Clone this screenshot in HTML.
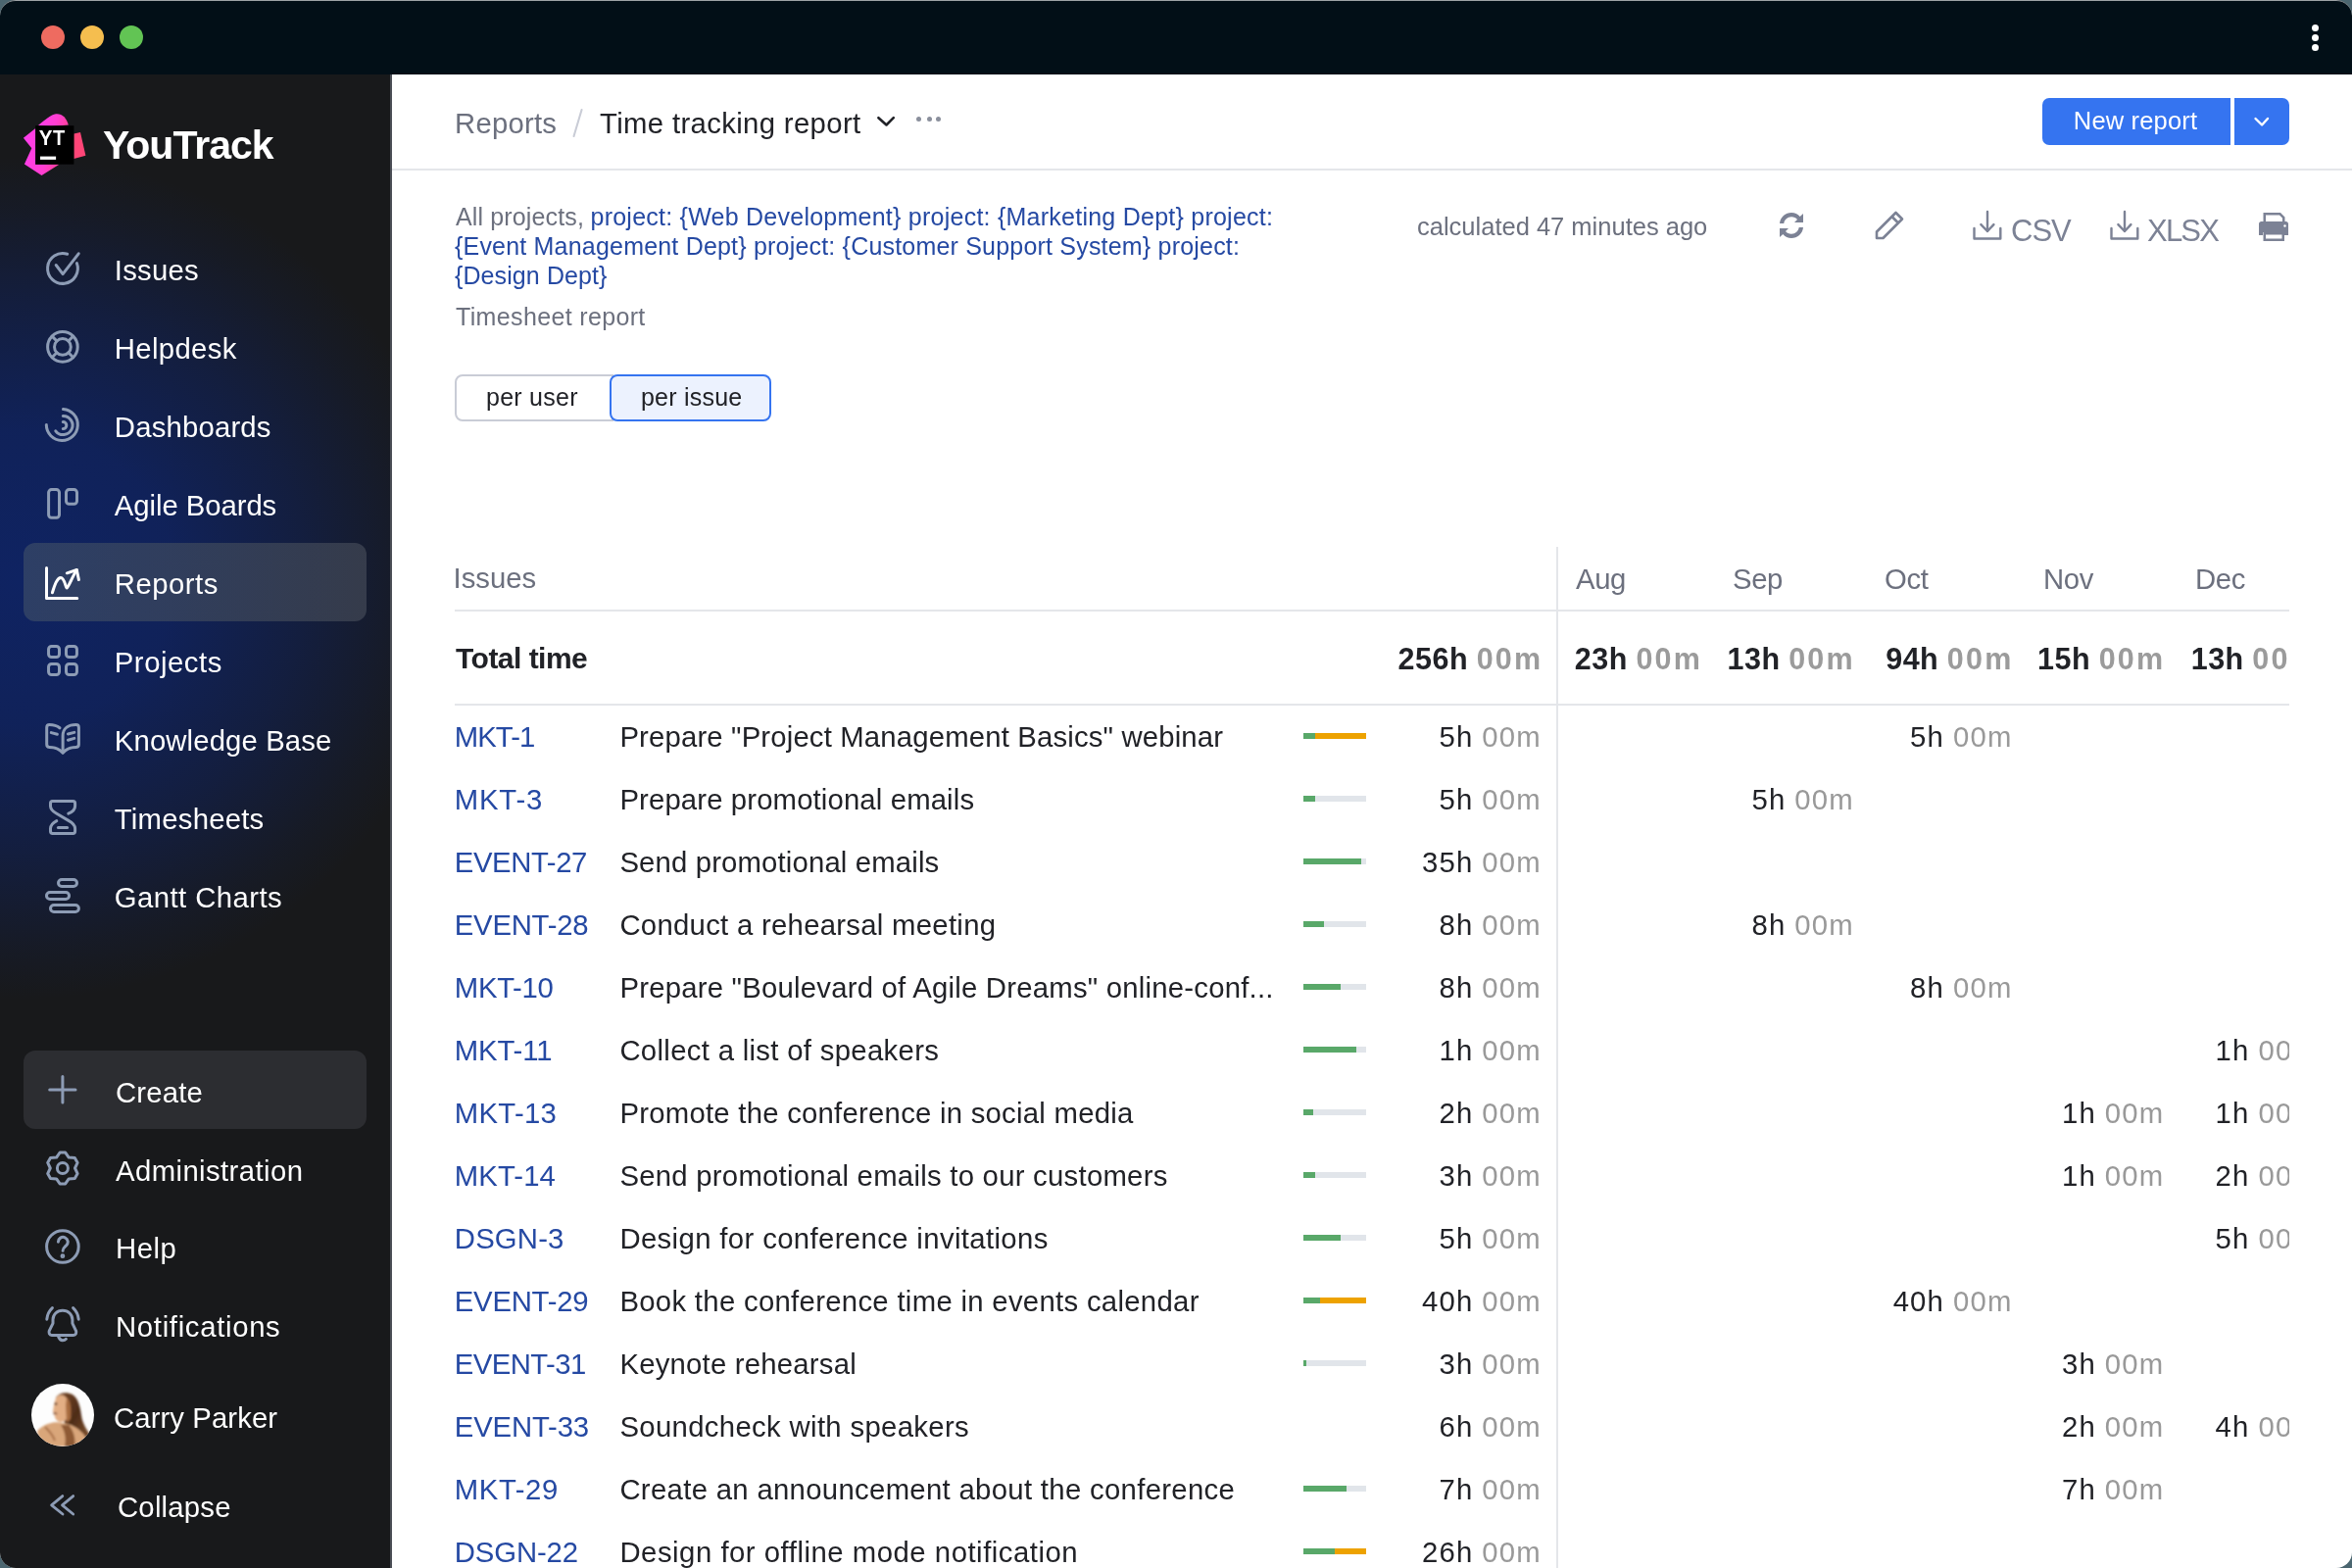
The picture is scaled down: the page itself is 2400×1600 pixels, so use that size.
<!DOCTYPE html>
<html><head><meta charset="utf-8">
<style>
*{box-sizing:border-box;margin:0;padding:0}
html,body{width:2400px;height:1600px;overflow:hidden;background:#4b6670}
body{font-family:"Liberation Sans",sans-serif}
.win{position:absolute;left:0;top:0;width:2400px;height:1600px;border-radius:16px;overflow:hidden;background:#fff;will-change:transform}
.a{position:absolute;white-space:nowrap}
.side{left:0;top:76px;width:400px;height:1524px;background:#18191b;overflow:hidden}
.glow{position:absolute;left:-430px;top:84px;width:900px;height:860px;border-radius:50%;background:radial-gradient(closest-side,rgba(15,35,98,1) 0%,rgba(15,35,98,.88) 35%,rgba(15,35,98,.5) 65%,rgba(15,35,98,.15) 88%,rgba(15,35,98,0) 100%)}
.glow2{display:none}
.topline{position:absolute;left:0;top:0;width:2400px;height:1600px;border-radius:16px;border-top:1.5px solid #9ea3a6;pointer-events:none}
</style></head><body>
<div class="win">
<div class="a" style="left:0px;top:0px;width:2400px;height:76px;background:#020f17"></div>
<div class="a" style="left:42px;top:26px;width:24px;height:24px;background:#ee6b60;border-radius:50%"></div>
<div class="a" style="left:82px;top:26px;width:24px;height:24px;background:#f5be4f;border-radius:50%"></div>
<div class="a" style="left:122px;top:26px;width:24px;height:24px;background:#62c454;border-radius:50%"></div>
<div class="a" style="left:2359px;top:24.5px;width:7px;height:7px;background:#fff;border-radius:50%"></div>
<div class="a" style="left:2359px;top:34.5px;width:7px;height:7px;background:#fff;border-radius:50%"></div>
<div class="a" style="left:2359px;top:44.5px;width:7px;height:7px;background:#fff;border-radius:50%"></div>
<div class="a side"><div class="glow"></div><div class="glow2"></div></div>
<div class="a" style="left:398px;top:76px;width:2px;height:1524px;background:#4b4e56"></div>
<svg class="a" style="left:16px;top:106px;" width="80" height="80" viewBox="0 0 80 80">
<defs><linearGradient id="lg" x1="0" y1="0" x2="1" y2="0.2">
<stop offset="0" stop-color="#ff3ef0"/><stop offset="0.7" stop-color="#ff3ed0"/><stop offset="1" stop-color="#ff40a8"/></linearGradient></defs>
<path fill="url(#lg)" d="M23 22 C30 16 36 11 41 10.2 C47 9.5 52 14 53.8 21.5 L36 23 Z"/>
<path fill="url(#lg)" d="M24 22 L7.9 34.7 L16.3 45.2 L8.9 61.5 L26.5 73 L44.4 61.7 L20.2 61.7 L20.2 25 Z"/>
<path fill="#ff4577" d="M59.4 30.6 L66 29.1 L71.4 52.8 L59.4 55.9 Z"/>
<rect x="20.2" y="22.2" width="39.2" height="39.5" fill="#000"/>
<path fill="#fff" d="M24 27 h3.2 l3.4 6.6 l3.4 -6.6 h3.2 l-5.2 9.4 v5.7 h-2.8 v-5.7 Z"/>
<path fill="#fff" d="M38.2 27 h11.8 v2.6 h-4.5 v12.5 h-2.8 v-12.5 h-4.5 Z"/>
<rect x="25" y="53.6" width="16.1" height="3.3" fill="#fff"/>
</svg>
<div class="a" style="left:105.0px;top:123.3px;font-size:41px;line-height:51px;color:#fff;font-weight:700;letter-spacing:-1.0px;">YouTrack</div>
<svg class="a" style="left:36px;top:246px;" width="60" height="60" viewBox="0 0 60 60"><g fill="none" stroke="#8d9cb5" stroke-width="3" stroke-linecap="round" stroke-linejoin="round"><path d="M32.7 13.3 A15.4 15.4 0 1 0 42.4 22.6"/><path d="M21.2 24.5 L28.1 33.6 L44.2 12.8"/></g></svg>
<div class="a" style="left:116.8px;top:257.3px;font-size:29.3px;line-height:37px;color:#fff;letter-spacing:0.26px;">Issues</div>
<svg class="a" style="left:36px;top:326px;" width="60" height="60" viewBox="0 0 60 60"><g fill="none" stroke="#8d9cb5" stroke-width="3" stroke-linecap="round" stroke-linejoin="round"><circle cx="27.9" cy="27.9" r="15.3"/><circle cx="27.9" cy="27.9" r="8.4"/><path d="M22 22 L17.1 17.1 M33.8 22 L38.7 17.1 M22 33.8 L17.1 38.7 M33.8 33.8 L38.7 38.7"/></g></svg>
<div class="a" style="left:116.8px;top:337.3px;font-size:29.3px;line-height:37px;color:#fff;letter-spacing:0.355px;">Helpdesk</div>
<svg class="a" style="left:36px;top:406px;" width="60" height="60" viewBox="0 0 60 60"><g fill="none" stroke="#8d9cb5" stroke-width="3" stroke-linecap="round" stroke-linejoin="round"><path d="M28.5 11.5 A16 16 0 1 1 11.3 27.6"/><path d="M28.3 18.4 A9.6 9.6 0 1 1 20.8 33.8"/><path d="M28.3 24.6 A3.5 3.5 0 0 1 28.3 31.6"/></g></svg>
<div class="a" style="left:116.8px;top:417.3px;font-size:29.3px;line-height:37px;color:#fff;letter-spacing:0.19px;">Dashboards</div>
<svg class="a" style="left:36px;top:486px;" width="60" height="60" viewBox="0 0 60 60"><g fill="none" stroke="#8d9cb5" stroke-width="3" stroke-linecap="round" stroke-linejoin="round"><rect x="13.6" y="13.6" width="10.9" height="28.7" rx="3"/><rect x="31.5" y="13.6" width="11" height="14.7" rx="3"/></g></svg>
<div class="a" style="left:116.8px;top:497.3px;font-size:29.3px;line-height:37px;color:#fff;letter-spacing:-0.059px;">Agile Boards</div>
<div class="a" style="left:24px;top:554px;width:350px;height:80px;border-radius:12px;background:linear-gradient(90deg,rgba(64,80,104,.62),rgba(64,70,84,.75))"></div>
<svg class="a" style="left:36px;top:566px;" width="60" height="60" viewBox="0 0 60 60"><g fill="none" stroke="#fff" stroke-width="3" stroke-linecap="round" stroke-linejoin="round"><path d="M11.5 13.4 V44.4 H42.7"/><path d="M17.4 38.7 C20 30 22.5 23.5 26 23.5 C30 23.5 31 34.1 32.1 34.1 C33.5 34.1 38 22 42.3 15.5"/><path d="M32.3 18.8 L42.3 15.5 L44.4 25.6"/></g></svg>
<div class="a" style="left:116.8px;top:577.3px;font-size:29.3px;line-height:37px;color:#fff;letter-spacing:0.498px;">Reports</div>
<svg class="a" style="left:36px;top:646px;" width="60" height="60" viewBox="0 0 60 60"><g fill="none" stroke="#8d9cb5" stroke-width="3" stroke-linecap="round" stroke-linejoin="round"><rect x="13.55" y="13.55" width="10.95" height="10.95" rx="3"/><rect x="31.5" y="13.55" width="10.95" height="10.95" rx="3"/><rect x="13.55" y="31.5" width="10.95" height="10.95" rx="3"/><rect x="31.5" y="31.5" width="10.95" height="10.95" rx="3"/></g></svg>
<div class="a" style="left:116.8px;top:657.3px;font-size:29.3px;line-height:37px;color:#fff;letter-spacing:0.529px;">Projects</div>
<svg class="a" style="left:36px;top:726px;" width="60" height="60" viewBox="0 0 60 60"><g fill="none" stroke="#8d9cb5" stroke-width="3" stroke-linecap="round" stroke-linejoin="round"><path d="M24.9 16.8 C22 14.5 18 13.6 14.5 13.6 C12.8 13.6 11.7 14.7 11.7 16.4 V33.6 C11.7 35.3 12.8 36.4 14.5 36.4 C19 36.4 24 37.5 28.1 42.3 C32 37.5 37 36.4 41.6 36.4 C43.3 36.4 44.4 35.3 44.4 33.6 V16.4 C44.4 14.7 43.3 13.6 41.6 13.6 C34 13.6 28.1 17 28.1 25 V40.5"/><path d="M16.3 21.6 L22.4 23.3 M33.4 23 L39.8 21.4 M33.4 29.2 L39.8 27.4"/></g></svg>
<div class="a" style="left:116.8px;top:737.3px;font-size:29.3px;line-height:37px;color:#fff;letter-spacing:0.126px;">Knowledge Base</div>
<svg class="a" style="left:36px;top:806px;" width="60" height="60" viewBox="0 0 60 60"><g fill="none" stroke="#8d9cb5" stroke-width="3" stroke-linecap="round" stroke-linejoin="round"><path d="M17.7 11.6 H38.4 C39.8 11.6 40.6 12.4 40.6 13.8 V16.5 C40.6 20 38 22.5 33.8 24.2"/><path d="M17.7 11.6 C16.3 11.6 15.5 12.4 15.5 13.8 V16.5 C15.5 20 18 22 21.5 24 L34.4 31.6 C38 33.6 40.6 36 40.6 39.5 V42.2 C40.6 43.6 39.8 44.4 38.4 44.4 H17.7 C16.3 44.4 15.5 43.6 15.5 42.2 V39.5 C15.5 36 18 33.6 21.8 31.6"/><path d="M23.4 38.5 H32.6"/></g></svg>
<div class="a" style="left:116.8px;top:817.3px;font-size:29.3px;line-height:37px;color:#fff;letter-spacing:0.237px;">Timesheets</div>
<svg class="a" style="left:36px;top:886px;" width="60" height="60" viewBox="0 0 60 60"><g fill="none" stroke="#8d9cb5" stroke-width="3" stroke-linecap="round" stroke-linejoin="round"><rect x="23.5" y="11.45" width="19" height="7" rx="3.5"/><rect x="11.45" y="24.55" width="23.1" height="7" rx="3.5"/><rect x="15.5" y="37.45" width="28.9" height="7" rx="3.5"/></g></svg>
<div class="a" style="left:116.8px;top:897.3px;font-size:29.3px;line-height:37px;color:#fff;letter-spacing:0.441px;">Gantt Charts</div>
<div class="a" style="left:24px;top:1072px;width:350px;height:80px;border-radius:12px;background:#2c2d31"></div>
<svg class="a" style="left:36px;top:1082px;" width="60" height="60" viewBox="0 0 60 60"><g fill="none" stroke="#8d9cb5" stroke-width="3" stroke-linecap="round" stroke-linejoin="round"><path d="M27.9 16.5 V42.9 M14.7 30 H41"/></g></svg>
<div class="a" style="left:118.0px;top:1095.8px;font-size:29.3px;line-height:37px;color:#fff;letter-spacing:0.18px;">Create</div>
<svg class="a" style="left:36px;top:1162px;" width="60" height="60" viewBox="0 0 60 60"><g fill="none" stroke="#8d9cb5" stroke-width="3" stroke-linecap="round" stroke-linejoin="round"><path d="M25.09 14.05 L30.71 14.05 L34.20 19.09 L40.31 19.59 L43.12 24.46 L40.50 30.00 L43.12 35.54 L40.31 40.41 L34.20 40.91 L30.71 45.95 L25.09 45.95 L21.60 40.91 L15.49 40.41 L12.68 35.54 L15.30 30.00 L12.68 24.46 L15.49 19.59 L21.60 19.09 Z"/><circle cx="27.9" cy="30" r="5.5"/></g></svg>
<div class="a" style="left:118.0px;top:1175.8px;font-size:29.3px;line-height:37px;color:#fff;letter-spacing:0.409px;">Administration</div>
<svg class="a" style="left:36px;top:1242px;" width="60" height="60" viewBox="0 0 60 60"><g fill="none" stroke="#8d9cb5" stroke-width="3" stroke-linecap="round" stroke-linejoin="round"><circle cx="27.9" cy="30" r="16.3"/><path d="M23.4 25.2 A4.9 4.9 0 1 1 31.6 28.9 C29.5 30.8 28.1 31.8 28.1 34.3"/><circle cx="27.9" cy="39.7" r="0.9" fill="#8d9cb5"/></g></svg>
<div class="a" style="left:118.0px;top:1254.8px;font-size:29.3px;line-height:37px;color:#fff;letter-spacing:0.502px;">Help</div>
<svg class="a" style="left:36px;top:1322px;" width="60" height="60" viewBox="0 0 60 60"><g fill="none" stroke="#8d9cb5" stroke-width="3" stroke-linecap="round" stroke-linejoin="round"><path d="M27.9 15.2 C22 15.2 18 19.5 18 24.5 V28.3 L14.3 35.8 C13.5 37.8 14.3 40.4 16.8 40.4 H39 C41.5 40.4 42.3 37.8 41.5 35.8 L37.9 28.3 V24.5 C37.9 19.5 33.8 15.2 27.9 15.2 Z"/><path d="M23.6 41.8 C24.6 45 26.5 45.8 27.9 45.8 C29.6 45.8 30.6 45.2 31.4 44.3"/><path d="M17.4 12.6 C14 15.8 12.2 19.5 11.8 24.2 M38.6 12.6 C42 15.8 43.8 19.5 44.2 24.2"/></g></svg>
<div class="a" style="left:118.0px;top:1334.8px;font-size:29.3px;line-height:37px;color:#fff;letter-spacing:0.682px;">Notifications</div>
<svg class="a" style="left:32px;top:1412px;" width="64" height="64" viewBox="0 0 64 64">
<defs><clipPath id="av"><circle cx="32" cy="32" r="32"/></clipPath>
<linearGradient id="hair" x1="0" y1="0" x2="1" y2="1"><stop offset="0" stop-color="#7a4a2a"/><stop offset="0.5" stop-color="#4e2c18"/><stop offset="1" stop-color="#8a5a34"/></linearGradient>
<filter id="bl" x="-20%" y="-20%" width="140%" height="140%"><feGaussianBlur stdDeviation="0.9"/></filter></defs>
<g clip-path="url(#av)">
<rect width="64" height="64" fill="#fdfdfd"/>
<g filter="url(#bl)">
<path d="M25 14 C28 9 36 8 42 11 C48 15 50 24 51 32 C52 40 56 46 60 52 L60 64 L30 64 L34 40 Z" fill="url(#hair)"/>
<path d="M26 13 C31 10 36 12 37 18 L38 30 C38 36 34 39 30 39 C26 39 24 35 23.5 32 L22 28 C23 24 23 18 26 13 Z" fill="#e3ae84"/>
<path d="M36 14 C40 16 41 26 40 36 L36 40 L35 22 Z" fill="#a86c40"/>
<path d="M6 48 C14 40 24 38 32 40 C40 41 46 44 52 50 C56 54 58 60 58 64 L10 64 C8 58 6 52 6 48 Z" fill="#d9a67a"/>
<path d="M30 42 C34 48 36 56 34 64 L44 64 C46 56 42 46 38 42 Z" fill="#8e5a34"/>
<path d="M14 44 C18 48 22 52 24 58" stroke="#a87048" stroke-width="2" fill="none"/>
<circle cx="25" cy="20.5" r="1.3" fill="#4a2a18"/>
<path d="M22.5 30.5 C24 30 25.5 30.2 26 31" stroke="#5a2a20" stroke-width="1.4" fill="none"/>
</g>
</g></svg>
<div class="a" style="left:116.0px;top:1428.3px;font-size:29.3px;line-height:37px;color:#fff;letter-spacing:0.091px;">Carry Parker</div>
<svg class="a" style="left:36px;top:1506px;" width="60" height="60" viewBox="0 0 60 60"><g fill="none" stroke="#8d9cb5" stroke-width="2.8" stroke-linecap="round" stroke-linejoin="round"><path d="M27.8 20.6 L16.6 29.8 L28 39"/><path d="M38.7 20.6 L27.5 29.8 L38.7 39"/></g></svg>
<div class="a" style="left:120.0px;top:1519.3px;font-size:29.3px;line-height:37px;color:#fff;letter-spacing:0.217px;">Collapse</div>
<div class="a" style="left:464.0px;top:107.3px;font-size:29.3px;line-height:37px;color:#6c707e;letter-spacing:0.236px;">Reports</div>
<svg class="a" style="left:580px;top:108px;" width="20" height="36" viewBox="0 0 20 36"><path d="M13.6 3.9 L5.5 31.1" stroke="#c9ccd6" stroke-width="2" stroke-linecap="round"/></svg>
<div class="a" style="left:612.0px;top:107.3px;font-size:29.3px;line-height:37px;color:#212227;letter-spacing:0.355px;">Time tracking report</div>
<svg class="a" style="left:890px;top:112px;" width="28" height="20" viewBox="0 0 28 20"><path d="M6.4 8.2 L14.5 15.5 L21.8 8.2" fill="none" stroke="#212227" stroke-width="2.6" stroke-linecap="round" stroke-linejoin="round"/></svg>
<div class="a" style="left:935.0px;top:119.2px;width:5.2px;height:5.2px;background:#8a8f9c;border-radius:50%"></div>
<div class="a" style="left:945.5px;top:119.2px;width:5.2px;height:5.2px;background:#8a8f9c;border-radius:50%"></div>
<div class="a" style="left:955.1999999999999px;top:119.2px;width:5.2px;height:5.2px;background:#8a8f9c;border-radius:50%"></div>
<div class="a" style="left:2084px;top:100px;width:192px;height:48px;background:#3574f0;border-radius:7px 0 0 7px"></div>
<div class="a" style="left:2280px;top:100px;width:56px;height:48px;background:#3574f0;border-radius:0 7px 7px 0"></div>
<div class="a" style="left:2115.8px;top:107.2px;font-size:25.5px;line-height:32px;color:#fff;letter-spacing:0.163px;">New report</div>
<svg class="a" style="left:2296px;top:112px;" width="24" height="24" viewBox="0 0 24 24"><path d="M5.5 9 L12.1 15.5 L18 9" fill="none" stroke="#fff" stroke-width="2.4" stroke-linecap="round" stroke-linejoin="round"/></svg>
<div class="a" style="left:400px;top:172px;width:2000px;height:2px;background:#e4e6ea"></div>
<div class="a" style="left:465.0px;top:205.8px;font-size:25px;line-height:31px;color:#6c707e;letter-spacing:0.136px;">All projects,</div>
<div class="a" style="left:602.5px;top:205.8px;font-size:25px;line-height:31px;color:#2549a3;letter-spacing:0.243px;">project: {Web Development} project: {Marketing Dept} project:</div>
<div class="a" style="left:464.0px;top:235.8px;font-size:25px;line-height:31px;color:#2549a3;letter-spacing:0.197px;">{Event Management Dept} project: {Customer Support System} project:</div>
<div class="a" style="left:464.0px;top:265.8px;font-size:25px;line-height:31px;color:#2549a3;letter-spacing:0.1px;">{Design Dept}</div>
<div class="a" style="left:465.0px;top:307.8px;font-size:25px;line-height:31px;color:#6c707e;letter-spacing:0.35px;">Timesheet report</div>
<div class="a" style="left:1446.0px;top:215.2px;font-size:25.5px;line-height:32px;color:#6c707e;">calculated 47 minutes ago</div>
<svg class="a" style="left:1810px;top:212px;" width="36" height="36" viewBox="0 0 36 36"><g fill="#7c8295">
<path d="M6 16 C6.5 9.5 12 5 18 5 C21.5 5 24.5 6.5 26.7 9 L30 6 V15 H21 L24 12 C22.5 10.3 20.5 9.3 18 9.3 C14 9.3 10.8 12.3 10.3 16 Z"/>
<path d="M30 20 C29.5 26.5 24 31 18 31 C14.5 31 11.5 29.5 9.3 27 L6 30 V21 H15 L12 24 C13.5 25.7 15.5 26.7 18 26.7 C22 26.7 25.2 23.7 25.7 20 Z"/>
</g></svg>
<svg class="a" style="left:1910px;top:212px;" width="36" height="36" viewBox="0 0 36 36"><g fill="none" stroke="#7c8295" stroke-width="2.6" stroke-linejoin="round"><path d="M5 31 L5 24.5 L24.5 5 L31 11.5 L11.5 31 Z"/><path d="M20.5 9 L27 15.5"/></g></svg>
<svg class="a" style="left:2012px;top:212px;" width="32" height="36" viewBox="0 0 32 36"><g fill="none" stroke="#7c8295" stroke-width="2.4" stroke-linecap="round" stroke-linejoin="round"><path d="M16 4 V24 M9.4 17.1 L16 24 L22.4 17.1"/><path d="M2.5 21 V31.5 H29.3 V21"/></g></svg>
<div class="a" style="left:2052.0px;top:215.8px;font-size:31px;line-height:39px;color:#7c8295;letter-spacing:-1.0px;">CSV</div>
<svg class="a" style="left:2152px;top:212px;" width="32" height="36" viewBox="0 0 32 36"><g fill="none" stroke="#7c8295" stroke-width="2.4" stroke-linecap="round" stroke-linejoin="round"><path d="M16 4 V24 M9.4 17.1 L16 24 L22.4 17.1"/><path d="M2.5 21 V31.5 H29.3 V21"/></g></svg>
<div class="a" style="left:2191.0px;top:215.8px;font-size:31px;line-height:39px;color:#7c8295;letter-spacing:-1.8px;">XLSX</div>
<svg class="a" style="left:2302px;top:212px;" width="36" height="36" viewBox="0 0 36 36"><g fill="#7c8295">
<path d="M7.5 5 H25 L29.5 9.5 V14 H27 V10.5 L24 7.5 H10 V14 H7.5 Z"/>
<path d="M3 16.5 C3 15 4 14 5.5 14 H30.5 C32 14 33 15 33 16.5 V28 H29 V25 H7 V28 H3 Z"/>
<path d="M7.5 25 H29 V34 H7.5 Z M10 27.5 V31.5 H26.5 V27.5 Z" fill-rule="evenodd"/>
<circle cx="29.5" cy="18.5" r="1.2" fill="#fff"/>
</g></svg>
<div class="a" style="left:464px;top:382px;width:162px;height:48px;border:2px solid #c9ccd6;border-radius:8px 0 0 8px;background:#fff"></div>
<div class="a" style="left:622px;top:382px;width:165px;height:48px;border:2px solid #3574f0;border-radius:8px;background:#ecf2fe"></div>
<div class="a" style="left:496.0px;top:389.8px;font-size:25px;line-height:31px;color:#212227;letter-spacing:0.261px;">per user</div>
<div class="a" style="left:654.0px;top:389.8px;font-size:25px;line-height:31px;color:#212227;letter-spacing:0.219px;">per issue</div>
<div class="a" style="left:462.5px;top:571.3px;font-size:29.3px;line-height:37px;color:#6c707e;letter-spacing:0.02px;">Issues</div>
<div class="a" style="left:1590px;top:540px;width:746px;height:1060px;overflow:hidden">
<div class="a" style="left:18.0px;top:31.8px;font-size:29.3px;line-height:37px;color:#6c707e;letter-spacing:-0.4px;">Aug</div>
<div class="a" style="left:178.0px;top:31.8px;font-size:29.3px;line-height:37px;color:#6c707e;letter-spacing:-0.4px;">Sep</div>
<div class="a" style="left:333.0px;top:31.8px;font-size:29.3px;line-height:37px;color:#6c707e;letter-spacing:-0.4px;">Oct</div>
<div class="a" style="left:495.0px;top:31.8px;font-size:29.3px;line-height:37px;color:#6c707e;letter-spacing:-0.4px;">Nov</div>
<div class="a" style="left:650.0px;top:31.8px;font-size:29.3px;line-height:37px;color:#6c707e;letter-spacing:-0.4px;">Dec</div>
<div class="a" style="left:0;top:82px;width:746px;height:2px;background:#e4e6ea"></div>
<div class="a" style="left:0;top:178px;width:746px;height:2px;background:#e4e6ea"></div>
<div class="a" style="right:598.9px;top:112.7px;font-size:30.5px;line-height:38px;color:#212227;font-weight:700;letter-spacing:2.2px;"><span style="letter-spacing:0.5px">23h</span><span style="color:#9b9b9b;margin-left:8.6px">00m</span></div>
<div class="a" style="right:443.2px;top:112.7px;font-size:30.5px;line-height:38px;color:#212227;font-weight:700;letter-spacing:2.2px;"><span style="letter-spacing:0.5px">13h</span><span style="color:#9b9b9b;margin-left:8.6px">00m</span></div>
<div class="a" style="right:281.5px;top:112.7px;font-size:30.5px;line-height:38px;color:#212227;font-weight:700;letter-spacing:2.2px;"><span style="letter-spacing:0.5px">94h</span><span style="color:#9b9b9b;margin-left:8.6px">00m</span></div>
<div class="a" style="right:126.7px;top:112.7px;font-size:30.5px;line-height:38px;color:#212227;font-weight:700;letter-spacing:2.2px;"><span style="letter-spacing:0.5px">15h</span><span style="color:#9b9b9b;margin-left:8.6px">00m</span></div>
<div class="a" style="right:-30.0px;top:112.7px;font-size:30.5px;line-height:38px;color:#212227;font-weight:700;letter-spacing:2.2px;"><span style="letter-spacing:0.5px">13h</span><span style="color:#9b9b9b;margin-left:8.6px">00m</span></div>
<div class="a" style="right:282.5px;top:193.1px;font-size:29.3px;line-height:37px;color:#212227;letter-spacing:1.2px;">5h<span style="color:#999;margin-left:8.8px">00m</span></div>
<div class="a" style="right:444.2px;top:257.1px;font-size:29.3px;line-height:37px;color:#212227;letter-spacing:1.2px;">5h<span style="color:#999;margin-left:8.8px">00m</span></div>
<div class="a" style="right:444.2px;top:385.1px;font-size:29.3px;line-height:37px;color:#212227;letter-spacing:1.2px;">8h<span style="color:#999;margin-left:8.8px">00m</span></div>
<div class="a" style="right:282.5px;top:449.1px;font-size:29.3px;line-height:37px;color:#212227;letter-spacing:1.2px;">8h<span style="color:#999;margin-left:8.8px">00m</span></div>
<div class="a" style="right:-29.0px;top:513.1px;font-size:29.3px;line-height:37px;color:#212227;letter-spacing:1.2px;">1h<span style="color:#999;margin-left:8.8px">00m</span></div>
<div class="a" style="right:127.7px;top:577.1px;font-size:29.3px;line-height:37px;color:#212227;letter-spacing:1.2px;">1h<span style="color:#999;margin-left:8.8px">00m</span></div>
<div class="a" style="right:-29.0px;top:577.1px;font-size:29.3px;line-height:37px;color:#212227;letter-spacing:1.2px;">1h<span style="color:#999;margin-left:8.8px">00m</span></div>
<div class="a" style="right:127.7px;top:641.1px;font-size:29.3px;line-height:37px;color:#212227;letter-spacing:1.2px;">1h<span style="color:#999;margin-left:8.8px">00m</span></div>
<div class="a" style="right:-29.0px;top:641.1px;font-size:29.3px;line-height:37px;color:#212227;letter-spacing:1.2px;">2h<span style="color:#999;margin-left:8.8px">00m</span></div>
<div class="a" style="right:-29.0px;top:705.1px;font-size:29.3px;line-height:37px;color:#212227;letter-spacing:1.2px;">5h<span style="color:#999;margin-left:8.8px">00m</span></div>
<div class="a" style="right:282.5px;top:769.1px;font-size:29.3px;line-height:37px;color:#212227;letter-spacing:1.2px;">40h<span style="color:#999;margin-left:8.8px">00m</span></div>
<div class="a" style="right:127.7px;top:833.1px;font-size:29.3px;line-height:37px;color:#212227;letter-spacing:1.2px;">3h<span style="color:#999;margin-left:8.8px">00m</span></div>
<div class="a" style="right:127.7px;top:897.1px;font-size:29.3px;line-height:37px;color:#212227;letter-spacing:1.2px;">2h<span style="color:#999;margin-left:8.8px">00m</span></div>
<div class="a" style="right:-29.0px;top:897.1px;font-size:29.3px;line-height:37px;color:#212227;letter-spacing:1.2px;">4h<span style="color:#999;margin-left:8.8px">00m</span></div>
<div class="a" style="right:127.7px;top:961.1px;font-size:29.3px;line-height:37px;color:#212227;letter-spacing:1.2px;">7h<span style="color:#999;margin-left:8.8px">00m</span></div>
</div>
<div class="a" style="left:1588px;top:558px;width:2px;height:1042px;background:#e4e6ea"></div>
<div class="a" style="left:464px;top:622px;width:1124px;height:2px;background:#e4e6ea"></div>
<div class="a" style="left:464px;top:718px;width:1124px;height:2px;background:#e4e6ea"></div>
<div class="a" style="left:465.0px;top:652.9px;font-size:30px;line-height:38px;color:#212227;font-weight:700;letter-spacing:-0.522px;">Total time</div>
<div class="a" style="right:825.7px;top:652.7px;font-size:30.5px;line-height:38px;color:#212227;font-weight:700;letter-spacing:2.2px;"><span style="letter-spacing:0.5px">256h</span><span style="color:#9b9b9b;margin-left:8.6px">00m</span></div>
<div class="a" style="left:463.8px;top:733.1px;font-size:29.3px;line-height:37px;color:#2549a3;letter-spacing:-0.95px;">MKT-1</div>
<div class="a" style="left:632.4px;top:733.1px;font-size:29.3px;line-height:37px;color:#212227;letter-spacing:0.165px;">Prepare "Project Management Basics" webinar</div>
<div class="a" style="left:1330px;top:748px;width:64px;height:6px;background:#e1e5ea"></div>
<div class="a" style="left:1330px;top:748px;width:11.5px;height:6px;background:#59a869"></div>
<div class="a" style="left:1341.52px;top:748px;width:52.5px;height:6px;background:#eda200"></div>
<div class="a" style="right:827.2px;top:733.1px;font-size:29.3px;line-height:37px;color:#212227;letter-spacing:1.2px;">5h<span style="color:#999;margin-left:8.8px">00m</span></div>
<div class="a" style="left:463.8px;top:797.1px;font-size:29.3px;line-height:37px;color:#2549a3;letter-spacing:0.8px;">MKT-3</div>
<div class="a" style="left:632.4px;top:797.1px;font-size:29.3px;line-height:37px;color:#212227;letter-spacing:0.136px;">Prepare promotional emails</div>
<div class="a" style="left:1330px;top:812px;width:64px;height:6px;background:#e1e5ea"></div>
<div class="a" style="left:1330px;top:812px;width:11.5px;height:6px;background:#59a869"></div>
<div class="a" style="right:827.2px;top:797.1px;font-size:29.3px;line-height:37px;color:#212227;letter-spacing:1.2px;">5h<span style="color:#999;margin-left:8.8px">00m</span></div>
<div class="a" style="left:463.8px;top:861.1px;font-size:29.3px;line-height:37px;color:#2549a3;letter-spacing:-0.412px;">EVENT-27</div>
<div class="a" style="left:632.4px;top:861.1px;font-size:29.3px;line-height:37px;color:#212227;letter-spacing:0.154px;">Send promotional emails</div>
<div class="a" style="left:1330px;top:876px;width:64px;height:6px;background:#e1e5ea"></div>
<div class="a" style="left:1330px;top:876px;width:58.9px;height:6px;background:#59a869"></div>
<div class="a" style="right:827.2px;top:861.1px;font-size:29.3px;line-height:37px;color:#212227;letter-spacing:1.2px;">35h<span style="color:#999;margin-left:8.8px">00m</span></div>
<div class="a" style="left:463.8px;top:925.1px;font-size:29.3px;line-height:37px;color:#2549a3;letter-spacing:-0.238px;">EVENT-28</div>
<div class="a" style="left:632.4px;top:925.1px;font-size:29.3px;line-height:37px;color:#212227;letter-spacing:0.286px;">Conduct a rehearsal meeting</div>
<div class="a" style="left:1330px;top:940px;width:64px;height:6px;background:#e1e5ea"></div>
<div class="a" style="left:1330px;top:940px;width:21.1px;height:6px;background:#59a869"></div>
<div class="a" style="right:827.2px;top:925.1px;font-size:29.3px;line-height:37px;color:#212227;letter-spacing:1.2px;">8h<span style="color:#999;margin-left:8.8px">00m</span></div>
<div class="a" style="left:463.8px;top:989.1px;font-size:29.3px;line-height:37px;color:#2549a3;letter-spacing:-0.3px;">MKT-10</div>
<div class="a" style="left:632.4px;top:989.1px;font-size:29.3px;line-height:37px;color:#212227;letter-spacing:0.228px;">Prepare "Boulevard of Agile Dreams" online-conf...</div>
<div class="a" style="left:1330px;top:1004px;width:64px;height:6px;background:#e1e5ea"></div>
<div class="a" style="left:1330px;top:1004px;width:37.8px;height:6px;background:#59a869"></div>
<div class="a" style="right:827.2px;top:989.1px;font-size:29.3px;line-height:37px;color:#212227;letter-spacing:1.2px;">8h<span style="color:#999;margin-left:8.8px">00m</span></div>
<div class="a" style="left:463.8px;top:1053.1px;font-size:29.3px;line-height:37px;color:#2549a3;letter-spacing:-0.14px;">MKT-11</div>
<div class="a" style="left:632.4px;top:1053.1px;font-size:29.3px;line-height:37px;color:#212227;letter-spacing:0.319px;">Collect a list of speakers</div>
<div class="a" style="left:1330px;top:1068px;width:64px;height:6px;background:#e1e5ea"></div>
<div class="a" style="left:1330px;top:1068px;width:53.8px;height:6px;background:#59a869"></div>
<div class="a" style="right:827.2px;top:1053.1px;font-size:29.3px;line-height:37px;color:#212227;letter-spacing:1.2px;">1h<span style="color:#999;margin-left:8.8px">00m</span></div>
<div class="a" style="left:463.8px;top:1117.1px;font-size:29.3px;line-height:37px;color:#2549a3;letter-spacing:0.3px;">MKT-13</div>
<div class="a" style="left:632.4px;top:1117.1px;font-size:29.3px;line-height:37px;color:#212227;letter-spacing:0.251px;">Promote the conference in social media</div>
<div class="a" style="left:1330px;top:1132px;width:64px;height:6px;background:#e1e5ea"></div>
<div class="a" style="left:1330px;top:1132px;width:9.6px;height:6px;background:#59a869"></div>
<div class="a" style="right:827.2px;top:1117.1px;font-size:29.3px;line-height:37px;color:#212227;letter-spacing:1.2px;">2h<span style="color:#999;margin-left:8.8px">00m</span></div>
<div class="a" style="left:463.8px;top:1181.1px;font-size:29.3px;line-height:37px;color:#2549a3;letter-spacing:0.1px;">MKT-14</div>
<div class="a" style="left:632.4px;top:1181.1px;font-size:29.3px;line-height:37px;color:#212227;letter-spacing:0.261px;">Send promotional emails to our customers</div>
<div class="a" style="left:1330px;top:1196px;width:64px;height:6px;background:#e1e5ea"></div>
<div class="a" style="left:1330px;top:1196px;width:11.5px;height:6px;background:#59a869"></div>
<div class="a" style="right:827.2px;top:1181.1px;font-size:29.3px;line-height:37px;color:#212227;letter-spacing:1.2px;">3h<span style="color:#999;margin-left:8.8px">00m</span></div>
<div class="a" style="left:463.8px;top:1245.1px;font-size:29.3px;line-height:37px;color:#2549a3;letter-spacing:0.18px;">DSGN-3</div>
<div class="a" style="left:632.4px;top:1245.1px;font-size:29.3px;line-height:37px;color:#212227;letter-spacing:0.372px;">Design for conference invitations</div>
<div class="a" style="left:1330px;top:1260px;width:64px;height:6px;background:#e1e5ea"></div>
<div class="a" style="left:1330px;top:1260px;width:37.8px;height:6px;background:#59a869"></div>
<div class="a" style="right:827.2px;top:1245.1px;font-size:29.3px;line-height:37px;color:#212227;letter-spacing:1.2px;">5h<span style="color:#999;margin-left:8.8px">00m</span></div>
<div class="a" style="left:463.8px;top:1309.1px;font-size:29.3px;line-height:37px;color:#2549a3;letter-spacing:-0.238px;">EVENT-29</div>
<div class="a" style="left:632.4px;top:1309.1px;font-size:29.3px;line-height:37px;color:#212227;letter-spacing:0.307px;">Book the conference time in events calendar</div>
<div class="a" style="left:1330px;top:1324px;width:64px;height:6px;background:#e1e5ea"></div>
<div class="a" style="left:1330px;top:1324px;width:17.3px;height:6px;background:#59a869"></div>
<div class="a" style="left:1347.28px;top:1324px;width:46.7px;height:6px;background:#eda200"></div>
<div class="a" style="right:827.2px;top:1309.1px;font-size:29.3px;line-height:37px;color:#212227;letter-spacing:1.2px;">40h<span style="color:#999;margin-left:8.8px">00m</span></div>
<div class="a" style="left:463.8px;top:1373.1px;font-size:29.3px;line-height:37px;color:#2549a3;letter-spacing:-0.555px;">EVENT-31</div>
<div class="a" style="left:632.4px;top:1373.1px;font-size:29.3px;line-height:37px;color:#212227;letter-spacing:0.22px;">Keynote rehearsal</div>
<div class="a" style="left:1330px;top:1388px;width:64px;height:6px;background:#e1e5ea"></div>
<div class="a" style="left:1330px;top:1388px;width:3.2px;height:6px;background:#59a869"></div>
<div class="a" style="right:827.2px;top:1373.1px;font-size:29.3px;line-height:37px;color:#212227;letter-spacing:1.2px;">3h<span style="color:#999;margin-left:8.8px">00m</span></div>
<div class="a" style="left:463.8px;top:1437.1px;font-size:29.3px;line-height:37px;color:#2549a3;letter-spacing:-0.157px;">EVENT-33</div>
<div class="a" style="left:632.4px;top:1437.1px;font-size:29.3px;line-height:37px;color:#212227;letter-spacing:0.341px;">Soundcheck with speakers</div>
<div class="a" style="right:827.2px;top:1437.1px;font-size:29.3px;line-height:37px;color:#212227;letter-spacing:1.2px;">6h<span style="color:#999;margin-left:8.8px">00m</span></div>
<div class="a" style="left:463.8px;top:1501.1px;font-size:29.3px;line-height:37px;color:#2549a3;letter-spacing:0.58px;">MKT-29</div>
<div class="a" style="left:632.4px;top:1501.1px;font-size:29.3px;line-height:37px;color:#212227;letter-spacing:0.319px;">Create an announcement about the conference</div>
<div class="a" style="left:1330px;top:1516px;width:64px;height:6px;background:#e1e5ea"></div>
<div class="a" style="left:1330px;top:1516px;width:44.2px;height:6px;background:#59a869"></div>
<div class="a" style="right:827.2px;top:1501.1px;font-size:29.3px;line-height:37px;color:#212227;letter-spacing:1.2px;">7h<span style="color:#999;margin-left:8.8px">00m</span></div>
<div class="a" style="left:463.8px;top:1565.1px;font-size:29.3px;line-height:37px;color:#2549a3;letter-spacing:-0.134px;">DSGN-22</div>
<div class="a" style="left:632.4px;top:1565.1px;font-size:29.3px;line-height:37px;color:#212227;letter-spacing:0.523px;">Design for offline mode notification</div>
<div class="a" style="left:1330px;top:1580px;width:64px;height:6px;background:#e1e5ea"></div>
<div class="a" style="left:1330px;top:1580px;width:32.0px;height:6px;background:#59a869"></div>
<div class="a" style="left:1362.0px;top:1580px;width:32.0px;height:6px;background:#eda200"></div>
<div class="a" style="right:827.2px;top:1565.1px;font-size:29.3px;line-height:37px;color:#212227;letter-spacing:1.2px;">26h<span style="color:#999;margin-left:8.8px">00m</span></div>
<div class="topline"></div>
</div>
</body></html>
